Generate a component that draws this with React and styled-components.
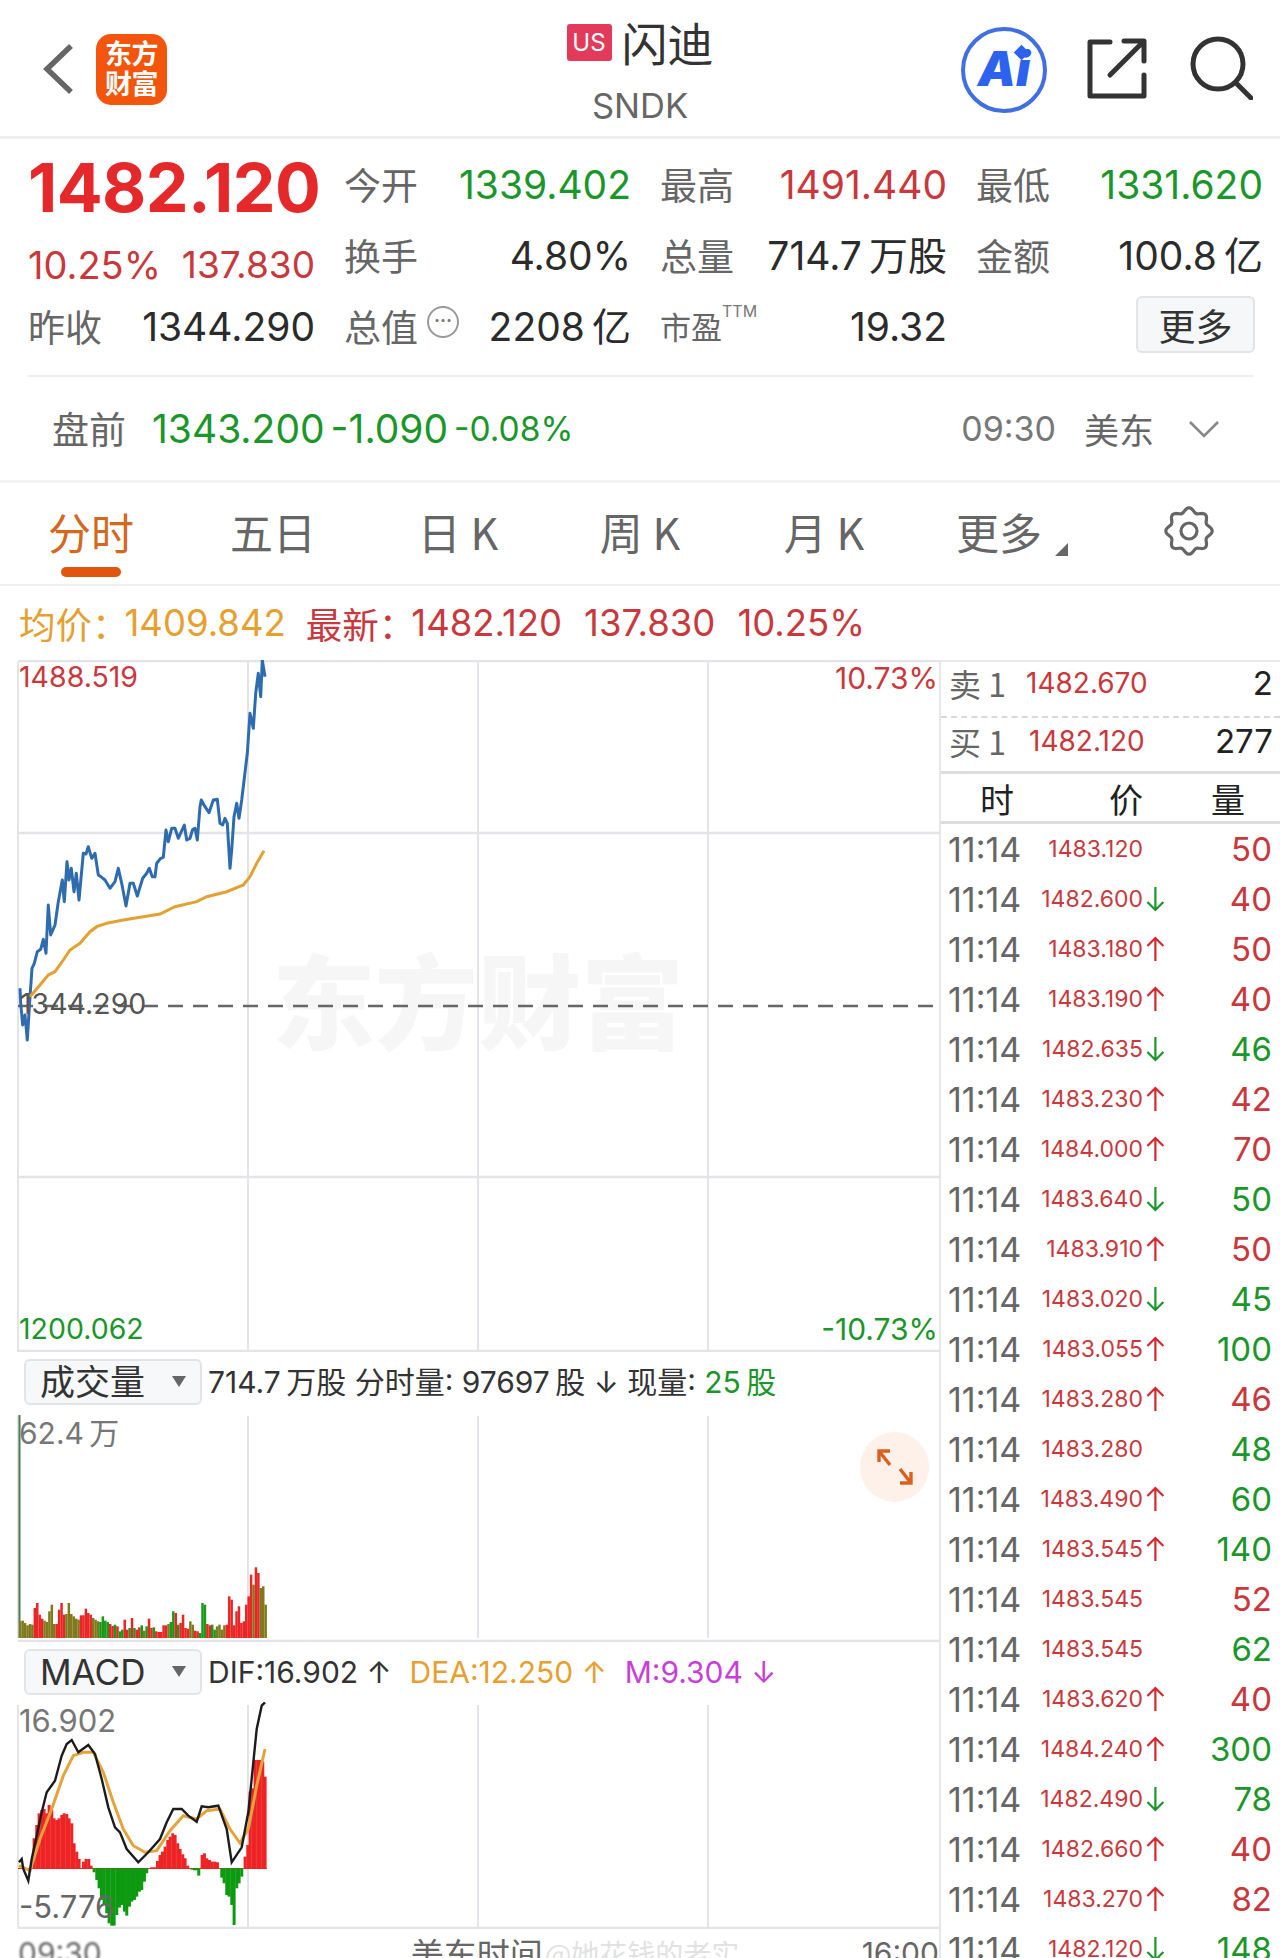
import React from 'react';
import styled, { createGlobalStyle } from 'styled-components';

const SOFT_RED = '#c8383c';
const GREEN = '#1b962a';
const ORANGE = '#e6a030';
const GREY = '#666';
const INK = '#2b2b2b';
const LINE = '#e4e4e8';
const THIN = '\u2009';

const pricePts = [[60,1015],[62,1060],[68,1125],[75,1095],[82,1170],[90,1040],[96,955],[103,940],[112,905],[122,898],[130,868],[138,910],[145,765],[152,855],[165,825],[175,755],[187,690],[193,755],[201,635],[207,690],[214,655],[222,725],[229,670],[237,750],[250,610],[258,612],[265,590],[275,625],[285,610],[295,675],[305,682],[315,690],[330,715],[345,695],[355,655],[365,700],[378,768],[390,700],[400,700],[412,738],[428,685],[440,670],[448,655],[457,680],[465,680],[470,640],[482,625],[490,622],[498,540],[505,575],[515,535],[525,535],[535,565],[553,525],[560,570],[570,565],[578,538],[585,535],[592,570],[600,470],[604,450],[615,470],[627,488],[640,450],[652,448],[660,520],[668,525],[675,505],[682,520],[690,655],[695,600],[702,500],[710,460],[717,505],[725,450],[733,385],[742,310],[750,190],[760,235],[767,130],[775,70],[782,140],[787,30],[795,80]];
const avgPts = [[90,1040],[120,1005],[145,975],[165,965],[190,930],[210,900],[240,880],[270,845],[290,830],[320,820],[370,810],[430,800],[480,792],[525,770],[590,755],[620,740],[680,725],[730,705],[750,680],[770,640],[792,602]];
const difPts = [[57,670],[65,660],[70,690],[85,725],[95,660],[110,590],[125,520],[140,460],[165,425],[185,350],[200,315],[215,303],[235,340],[265,318],[285,345],[305,420],[325,505],[345,565],[360,580],[380,630],[415,670],[445,640],[480,600],[500,550],[520,510],[545,510],[565,530],[590,548],[605,502],[625,505],[655,500],[680,570],[695,670],[725,625],[745,520],[770,270],[785,200],[795,190]];
const deaPts = [[57,680],[90,695],[120,600],[155,510],[190,410],[220,350],[250,340],[280,340],[310,400],[340,490],[370,570],[400,620],[435,640],[470,635],[510,575],[550,530],[590,540],[620,515],[660,510],[690,570],[720,612],[745,570],[770,440],[795,330]];

const volHeights = [50,52,45,38,42,40,90,105,70,58,52,48,80,100,42,42,85,105,70,72,105,72,65,58,55,68,68,88,75,70,60,55,50,48,65,52,48,42,36,40,35,20,25,55,25,30,60,30,25,32,38,22,35,58,30,32,20,18,18,38,38,42,48,80,75,40,45,70,30,28,50,40,22,20,15,105,100,42,38,40,25,35,40,25,38,40,125,115,38,80,95,45,50,100,125,190,160,212,195,150,155,100];
const volColors = 'oooooorrrrooooorrrroooooorrrrroooggggrrgrggrrgrgrrgogrrgrrrrroggrgrrrroorrgggrrggoooorrrrr' + 'rrrrrrorroo';

const histBars = [[102,90],[110,130],[117,165],[125,175],[132,178],[140,165],[147,190],[155,175],[162,150],[170,145],[177,150],[185,160],[192,165],[200,163],[207,150],[215,135],[222,75],[230,50],[237,28],[250,20],[258,28],[266,28],[273,8],[282,-12],[290,-35],[297,-60],[304,-95],[312,-110],[320,-135],[327,-165],[335,-172],[342,-172],[350,-140],[358,-118],[365,-110],[373,-130],[380,-142],[388,-115],[395,-100],[403,-95],[410,-85],[418,-70],[425,-65],[433,-40],[440,-15],[455,3],[463,3],[472,22],[480,40],[487,50],[495,65],[503,85],[510,95],[518,105],[525,100],[533,75],[540,58],[548,42],[555,30],[563,8],[575,-4],[583,-6],[590,-6],[596,-22],[606,40],[613,45],[620,30],[628,25],[636,20],[644,20],[652,18],[665,-28],[672,-45],[680,-80],[687,-85],[695,-110],[702,-170],[710,-60],[717,-45],[725,-25],[735,35],[743,70],[750,230],[758,240],[765,325],[773,325],[780,325],[788,320],[795,275]];

const toPage = (pts, oy) => pts.map(([x, y]) => `${(x / 3).toFixed(1)},${(y / 3 + oy).toFixed(1)}`).join(' ');

// scalloped outline of the settings gear
const gearPath = Array.from({ length: 97 }, (_, i) => {
  const a = (i / 96) * Math.PI * 2;
  const r = 21 + 2.2 * Math.cos(a * 8);
  return `${(25 + r * Math.cos(a)).toFixed(2)},${(25 + r * Math.sin(a)).toFixed(2)}`;
}).join(' ');

const rows = [
  ['1483.120', '', '50', 'r'], ['1482.600', 'd', '40', 'r'], ['1483.180', 'u', '50', 'r'], ['1483.190', 'u', '40', 'r'],
  ['1482.635', 'd', '46', 'g'], ['1483.230', 'u', '42', 'r'], ['1484.000', 'u', '70', 'r'], ['1483.640', 'd', '50', 'g'],
  ['1483.910', 'u', '50', 'r'], ['1483.020', 'd', '45', 'g'], ['1483.055', 'u', '100', 'g'], ['1483.280', 'u', '46', 'r'],
  ['1483.280', '', '48', 'g'], ['1483.490', 'u', '60', 'g'], ['1483.545', 'u', '140', 'g'], ['1483.545', '', '52', 'r'],
  ['1483.545', '', '62', 'g'], ['1483.620', 'u', '40', 'r'], ['1484.240', 'u', '300', 'g'], ['1482.490', 'd', '78', 'g'],
  ['1482.660', 'u', '40', 'r'], ['1483.270', 'u', '82', 'r'], ['1482.120', 'd', '148', 'g'],
];

const GlobalStyle = createGlobalStyle`
  html, body { margin: 0; padding: 0; background: #fff; }
  * { box-sizing: border-box; }
`;

const Arrow = ({ dir, color, size = 26 }) => (
  <svg width={size * 0.8} height={size} viewBox="0 0 20 26" fill="none" stroke={color} strokeWidth="2.2">
    {dir === 'u' ? <path d="M10 25V2M2 10l8-8 8 8" /> : <path d="M10 1v23M2 16l8 8 8-8" />}
  </svg>
);

const GridLines = ({ top, height, rowsAt = [] }) => (
  <>
    {[248, 478, 708].map(x => <line key={x} x1={x} x2={x} y1={top} y2={top + height} stroke={LINE} strokeWidth="2" />)}
    {rowsAt.map(y => <line key={y} x1="18" x2="939" y1={y} y2={y} stroke={LINE} strokeWidth="2.5" />)}
    <line x1="18" x2="18" y1={top} y2={top + height} stroke="#ddd" strokeWidth="1.5" />
  </>
);

export default function App() {
  return (
    <Page>
      <GlobalStyle />
      <Header>
        <HeaderLeft>
          <svg width="32" height="52" viewBox="0 0 32 52" fill="none" stroke="#666" strokeWidth="5.5">
            <path d="M29 3L5 26l24 23" />
          </svg>
          <Logo>东方<br />财富</Logo>
        </HeaderLeft>
        <TitleBlock>
          <TitleLine><Badge>US</Badge><StockName>闪迪</StockName></TitleLine>
          <Ticker>SNDK</Ticker>
        </TitleBlock>
        <HeaderRight>
          <AiBadge>Ai<AiSpark /></AiBadge>
          <svg width="62" height="62" viewBox="0 0 62 62" fill="none" stroke="#333" strokeWidth="5" strokeLinecap="round" strokeLinejoin="round">
            <path d="M24 5H4v54h54V38M24 38L57 5M38 4h20v20" />
          </svg>
          <svg width="64" height="64" viewBox="0 0 64 64" fill="none" stroke="#333" strokeWidth="5" strokeLinecap="round">
            <circle cx="29" cy="28" r="25" />
            <path d="M47 47l15 15" />
          </svg>
        </HeaderRight>
      </Header>

      <Quote>
        <Cell><BigPrice>1482.120</BigPrice></Cell>
        <Cell><Label>今开</Label><Value $color={GREEN}>1339.402</Value></Cell>
        <Cell><Label>最高</Label><Value $color={SOFT_RED}>1491.440</Value></Cell>
        <Cell><Label>最低</Label><Value $color={GREEN}>1331.620</Value></Cell>
        <Cell $lower><Value $color={SOFT_RED} $size={38}>10.25%</Value><Value $color={SOFT_RED} $size={37}>137.830</Value></Cell>
        <Cell><Label>换手</Label><Value>4.80%</Value></Cell>
        <Cell><Label>总量</Label><Value>{`714.7${THIN}万股`}</Value></Cell>
        <Cell><Label>金额</Label><Value>{`100.8${THIN}亿`}</Value></Cell>
        <Cell><Label>昨收</Label><Value>1344.290</Value></Cell>
        <Cell>
          <LabelGroup>
            <Label>总值</Label>
            <MoreDot>···</MoreDot>
          </LabelGroup>
          <Value>{`2208${THIN}亿`}</Value>
        </Cell>
        <Cell>
          <LabelGroup>
            <SmallLabel>市盈</SmallLabel>
            <Ttm>TTM</Ttm>
          </LabelGroup>
          <Value>19.32</Value>
        </Cell>
        <Cell $end><MoreButton>更多</MoreButton></Cell>
      </Quote>

      <PreMarket>
        <Label>盘前</Label>
        <PreValue>1343.200</PreValue>
        <PreValue>-1.090</PreValue>
        <PreSmall>-0.08%</PreSmall>
        <PreRight>
          <PreTime>09:30</PreTime>
          <PreZone>美东</PreZone>
          <svg width="32" height="20" viewBox="0 0 32 20" fill="none" stroke="#888" strokeWidth="2.6">
            <path d="M2 3l14 14L30 3" />
          </svg>
        </PreRight>
      </PreMarket>

      <Tabs>
        <Tab $active>分时</Tab>
        <Tab>五日</Tab>
        <Tab>日 K</Tab>
        <Tab>周 K</Tab>
        <Tab>月 K</Tab>
        <Tab>更多<MoreCorner /></Tab>
        <Tab>
          <svg width="50" height="50" viewBox="0 0 50 50" fill="none" stroke="#666" strokeWidth="3.2" strokeLinejoin="round">
            <polygon points={gearPath} />
            <circle cx="25" cy="25" r="8" />
          </svg>
        </Tab>
      </Tabs>

      <InfoLine>
        <InfoText $color={ORANGE} $gap={-4}>均价：</InfoText>
        <InfoText $color={ORANGE} $gap={20}>1409.842</InfoText>
        <InfoText $color={SOFT_RED} $gap={-4}>最新：</InfoText>
        <InfoText $color={SOFT_RED} $gap={22}>1482.120</InfoText>
        <InfoText $color={SOFT_RED} $gap={22}>137.830</InfoText>
        <InfoText $color={SOFT_RED}>10.25%</InfoText>
      </InfoLine>

      <Market>
        <Charts>
          <ChartBox $height={692} $top>
            <Watermark>东方财富</Watermark>
            <svg width="939" height="692" viewBox="0 660 939 692">
              <GridLines top={662} height={690} rowsAt={[661, 833, 1177, 1351]} />
              <line x1="18" x2="939" y1="1006" y2="1006" stroke="#666" strokeWidth="2.4" strokeDasharray="15 10" />
              <polyline points={toPage(pricePts, 650)} fill="none" stroke="#2f6cae" strokeWidth="3" strokeLinejoin="round" />
              <polyline points={toPage(avgPts, 650)} fill="none" stroke="#e3a033" strokeWidth="3" />
            </svg>
            <AxisLabel $top={-1} $left={19} $color={SOFT_RED}>1488.519</AxisLabel>
            <AxisLabel $top={0} $right={1} $size={30} $color={SOFT_RED}>10.73%</AxisLabel>
            <AxisLabel $top={326} $left={20} $color="#555">1344.290</AxisLabel>
            <AxisLabel $top={651} $left={19} $color={GREEN}>1200.062</AxisLabel>
            <AxisLabel $top={651} $right={1} $size={30} $color={GREEN}>-10.73%</AxisLabel>
          </ChartBox>

          <IndicatorBar>
            <Selector>成交量<SelectCaret /></Selector>
            <IndicatorText>{`714.7${THIN}万股 分时量: 97697${THIN}股 ↓ 现量: `}<Tint $color={GREEN}>{`25${THIN}股`}</Tint></IndicatorText>
          </IndicatorBar>

          <ChartBox $height={230}>
            <svg width="939" height="230" viewBox="0 1412 939 230">
              <GridLines top={1416} height={222} rowsAt={[1641]} />
              <rect x="18.5" y="1415" width="2" height="223" fill="#4c7d52" />
              {volHeights.map((h, i) => {
                const c = volColors[i] || 'o';
                return (
                  <rect key={i} x={19 + i * 2.43} y={1638 - h / 3} width="2.5" height={h / 3}
                    fill={c === 'r' ? '#e92525' : c === 'g' ? '#189a18' : '#7f7a1e'} />
                );
              })}
            </svg>
            <AxisLabel $top={3} $left={19} $size={30} $color="#777">{`62.4${THIN}万`}</AxisLabel>
            <Expand>
              <svg width="38" height="38" viewBox="0 0 38 38" fill="none" stroke="#d9601e" strokeWidth="3.4">
                <path d="M3 14V3h11M3 3l11 14M35 24v11H24M35 35L24 21" />
              </svg>
            </Expand>
          </ChartBox>

          <IndicatorBar>
            <Selector>MACD<SelectCaret /></Selector>
            <IndicatorText $size={30}>
              DIF:16.902 ↑<Tint $color={ORANGE} $gap={18}>DEA:12.250 ↑</Tint><Tint $color="#c83fd8" $gap={18}>M:9.304 ↓</Tint>
            </IndicatorText>
          </IndicatorBar>

          <ChartBox $height={227}>
            <svg width="939" height="227" viewBox="0 1703 939 227">
              <GridLines top={1706} height={222} rowsAt={[1929]} />
              <line x1="18" x2="267" y1="1869.5" y2="1869.5" stroke="#e92525" strokeWidth="1" />
              {histBars.map(([x, h], i) => (
                <rect key={i} x={x / 3 - 1.4} y={h > 0 ? 1869.3 - h / 3 : 1869.3} width="3" height={Math.abs(h) / 3}
                  fill={h > 0 ? '#ee2424' : '#0c9a10'} />
              ))}
              <polyline points={toPage(deaPts, 1640)} fill="none" stroke="#e4a33c" strokeWidth="3" />
              <polyline points={toPage(difPts, 1640)} fill="none" stroke="#1c1c1c" strokeWidth="2.4" />
            </svg>
            <AxisLabel $top={1} $left={19} $size={31} $color="#777">16.902</AxisLabel>
            <AxisLabel $top={187} $left={19} $size={31} $color="#666">-5.776</AxisLabel>
          </ChartBox>

          <AxisRow>
            <AxisTime $blur>09:30</AxisTime>
            <AxisMid>美东时间<Ghost>@她花钱的老实</Ghost></AxisMid>
            <AxisTime>16:00</AxisTime>
          </AxisRow>
        </Charts>

        <TradePanel>
          <BookRow $dashed>
            <BookSide>卖 1</BookSide>
            <BookPrice>1482.670</BookPrice>
            <BookQty>2</BookQty>
          </BookRow>
          <BookRow>
            <BookSide>买 1</BookSide>
            <BookPrice $shift>1482.120</BookPrice>
            <BookQty>277</BookQty>
          </BookRow>
          <TradeHead>
            <span>时</span>
            <span>价</span>
            <span>量</span>
          </TradeHead>
          {rows.map(([price, dir, qty, tone], i) => (
            <TradeRow key={i}>
              <TradeTime>11:14</TradeTime>
              <TradePrice>{price}</TradePrice>
              <ArrowSlot>{dir && <Arrow dir={dir} color={dir === 'u' ? '#d5282c' : '#1b962a'} />}</ArrowSlot>
              <TradeQty $color={tone === 'r' ? SOFT_RED : GREEN}>{qty}</TradeQty>
            </TradeRow>
          ))}
        </TradePanel>
      </Market>
    </Page>
  );
}

const Page = styled.div`
  width: 1280px;
  height: 1958px;
  overflow: hidden;
  background: #fff;
  color: ${INK};
  font-family: Inter, "Noto Sans CJK SC", sans-serif;
`;

const Header = styled.header`
  height: 139px;
  border-bottom: 3px solid #eee;
  display: grid;
  grid-template-columns: 1fr auto 1fr;
  align-items: center;
`;
const HeaderLeft = styled.div`
  display: flex;
  align-items: center;
  gap: 22px;
  padding-left: 42px;
  margin-top: 2px;
`;
const Logo = styled.div`
  width: 71px;
  height: 71px;
  border-radius: 15px;
  background: #f4550c;
  color: #fff;
  font-family: "Noto Sans CJK SC", sans-serif;
  font-weight: 700;
  font-size: 27px;
  line-height: 30px;
  text-align: center;
  padding-top: 4px;
  letter-spacing: -0.5px;
`;
const TitleBlock = styled.div`
  display: flex;
  flex-direction: column;
  align-items: center;
`;
const TitleLine = styled.div`
  display: flex;
  align-items: center;
  gap: 10px;
  height: 64px;
  margin-top: 6px;
`;
const Badge = styled.span`
  width: 45px;
  height: 37px;
  margin-top: -7px;
  border-radius: 3px;
  background: #e23a5a;
  color: #fff;
  font-size: 24px;
  line-height: 37px;
  text-align: center;
`;
const StockName = styled.span`
  font-family: "Noto Sans CJK SC", sans-serif;
  font-size: 46px;
  line-height: 64px;
  margin-top: -11px;
  color: #333;
`;
const Ticker = styled.div`
  font-size: 34.5px;
  line-height: 44px;
  color: #666;
  margin-top: 6px;
`;
const HeaderRight = styled.div`
  display: flex;
  align-items: center;
  justify-content: flex-end;
  gap: 41px;
  padding-right: 27px;
`;
const AiBadge = styled.div`
  position: relative;
  width: 86px;
  height: 86px;
  margin: 4px -2px 0 0;
  border: 4px solid #3f6fe0;
  border-radius: 50%;
  color: #2c62ee;
  font-size: 48px;
  font-weight: 900;
  font-style: italic;
  line-height: 76px;
  text-align: center;
`;
const AiSpark = styled.i`
  position: absolute;
  top: 16px;
  right: 16px;
  width: 11px;
  height: 11px;
  background: #2c62ee;
  transform: rotate(45deg);
`;

const Quote = styled.section`
  margin: 0 27px 0 28px;
  padding-top: 10px;
  height: 238px;
  border-bottom: 2px solid #eee;
  display: grid;
  grid-template-columns: repeat(4, 287px);
  column-gap: 29px;
  grid-auto-rows: 71px;
`;
const Cell = styled.div`
  display: flex;
  align-items: center;
  justify-content: ${p => (p.$end ? 'flex-end' : 'space-between')};
  padding-top: ${p => (p.$lower ? 18 : 0)}px;
  padding-right: ${p => (p.$end ? 8 : 0)}px;
`;
const BigPrice = styled.div`
  font-size: 68px;
  font-weight: 700;
  letter-spacing: -0.6px;
  margin-top: 5px;
  color: #e5282a;
`;
const Label = styled.span`
  font-family: "Noto Sans CJK SC", sans-serif;
  font-size: 37px;
  line-height: 50px;
  margin-top: -2px;
  color: ${GREY};
`;
const SmallLabel = styled(Label)`
  font-size: 31px;
`;
const Value = styled.span`
  font-size: ${p => p.$size || 39}px;
  line-height: 46px;
  white-space: nowrap;
  color: ${p => p.$color || INK};
`;
const LabelGroup = styled.div`
  position: relative;
  display: flex;
  align-items: center;
`;
const MoreDot = styled.span`
  position: absolute;
  left: 83px;
  top: 3px;
  width: 32px;
  height: 32px;
  border: 2px solid #999;
  border-radius: 50%;
  font-size: 18px;
  font-weight: 700;
  line-height: 25px;
  text-align: center;
  color: #777;
`;
const Ttm = styled.span`
  position: absolute;
  left: 62px;
  top: -2px;
  font-size: 16px;
  color: #777;
`;
const MoreButton = styled.button`
  width: 119px;
  height: 57px;
  margin-top: -4px;
  border: 2px solid #e2e4e8;
  border-radius: 6px;
  background: #f5f7f9;
  font-family: "Noto Sans CJK SC", sans-serif;
  font-size: 37px;
  color: #333;
  padding: 0;
`;

const PreMarket = styled.section`
  height: 106px;
  border-bottom: 3px solid #f2f2f2;
  display: flex;
  align-items: center;
  padding: 0 60px 0 52px;
  gap: 6px;
`;
const PreValue = styled.span`
  font-size: 39px;
  color: ${GREEN};
  margin-left: 20px;
  margin-right: -20px;
`;
const PreSmall = styled.span`
  font-size: 33.5px;
  color: ${GREEN};
  margin-left: 20px;
`;
const PreRight = styled.div`
  margin-left: auto;
  display: flex;
  align-items: center;
  gap: 28px;
  color: #777;
`;
const PreTime = styled.span`
  font-size: 34px;
  color: #777;
`;
const PreZone = styled.span`
  font-family: "Noto Sans CJK SC", sans-serif;
  font-size: 35px;
  margin-right: 6px;
  color: ${GREY};
`;

const Tabs = styled.nav`
  height: 103px;
  border-bottom: 2px solid #f0f0f0;
  display: grid;
  grid-template-columns: 182px 182px 188px 176px 192px 158px 222px;
`;
const Tab = styled.div`
  position: relative;
  display: flex;
  align-items: center;
  justify-content: center;
  padding-bottom: 5px;
  font-family: "Noto Sans CJK SC", Inter, sans-serif;
  font-size: 43px;
  color: ${p => (p.$active ? '#d2691e' : GREY)};
  &::after {
    content: '';
    display: ${p => (p.$active ? 'block' : 'none')};
    position: absolute;
    left: 61px;
    bottom: 7px;
    width: 60px;
    height: 10px;
    border-radius: 5px;
    background: #e0560f;
  }
`;
const MoreCorner = styled.i`
  position: absolute;
  right: 10px;
  top: 60px;
  width: 0;
  height: 0;
  border-left: 13px solid transparent;
  border-bottom: 13px solid #666;
`;

const InfoLine = styled.div`
  height: 74px;
  display: flex;
  align-items: center;
  padding-left: 19px;
`;
const InfoText = styled.span`
  font-size: 36.5px;
  color: ${p => p.$color};
  margin-right: ${p => p.$gap || 0}px;
`;

const Market = styled.div`
  display: flex;
  height: 1300px;
`;
const Charts = styled.div`
  width: 939px;
  flex: none;
`;
const ChartBox = styled.div`
  position: relative;
  height: ${p => p.$height}px;
  & > svg { display: block; position: relative; }
`;
const Watermark = styled.div`
  position: absolute;
  left: 272px;
  top: 278px;
  font-family: "Noto Sans CJK SC", sans-serif;
  font-size: 103px;
  font-weight: 900;
  color: #f6f6f6;
  white-space: nowrap;
  line-height: 120px;
`;
const AxisLabel = styled.div`
  position: absolute;
  top: ${p => p.$top}px;
  ${p => (p.$left !== undefined ? `left: ${p.$left}px;` : `right: ${p.$right}px;`)}
  font-size: ${p => p.$size || 28.5}px;
  line-height: 36px;
  color: ${p => p.$color};
`;
const IndicatorBar = styled.div`
  height: 60px;
  display: flex;
  align-items: center;
  padding-left: 24px;
`;
const Selector = styled.div`
  position: relative;
  width: 178px;
  height: 46px;
  border: 2px solid #e2e4e8;
  border-radius: 6px;
  background: #f6f8f9;
  font-size: 35px;
  line-height: 42px;
  padding-left: 14px;
  color: #333;
`;
const SelectCaret = styled.i`
  position: absolute;
  right: 14px;
  top: 15px;
  width: 0;
  height: 0;
  border-left: 7px solid transparent;
  border-right: 7px solid transparent;
  border-top: 11px solid #666;
`;
const IndicatorText = styled.div`
  margin-left: 6px;
  font-size: ${p => p.$size || 30}px;
  line-height: 40px;
  color: #333;
  white-space: nowrap;
`;
const Tint = styled.span`
  color: ${p => p.$color};
  margin-left: ${p => p.$gap || 0}px;
`;
const Expand = styled.div`
  position: absolute;
  left: 860px;
  top: 20px;
  width: 69px;
  height: 70px;
  border-radius: 50%;
  background: #fdf1ea;
  display: flex;
  align-items: center;
  justify-content: center;
`;
const AxisRow = styled.div`
  height: 28px;
  padding: 4px 0 0 18px;
  display: flex;
  justify-content: space-between;
  font-size: 30px;
  line-height: 40px;
  color: #666;
`;
const AxisTime = styled.span`
  filter: ${p => (p.$blur ? 'blur(1px)' : 'none')};
`;
const AxisMid = styled.span`
  position: relative;
  font-family: "Noto Sans CJK SC", sans-serif;
  font-size: 33px;
  margin-right: 10px;
`;
const Ghost = styled.span`
  position: absolute;
  left: 134px;
  top: 0;
  white-space: nowrap;
  color: #e2e2e2;
  font-size: 28px;
`;

const TradePanel = styled.aside`
  flex: 1;
  border-left: 2px solid #e6e6e6;
  border-top: 2px solid #e8e8e8;
`;
const BookRow = styled.div`
  height: 56px;
  padding: ${p => (p.$dashed ? '0 7px 12px 8px' : '0 7px 8px 8px')};
  display: flex;
  align-items: center;
  border-bottom: ${p => (p.$dashed ? '2px dashed #d8d8d8' : '3px solid #ddd')};
`;
const BookSide = styled.span`
  font-family: "Noto Sans CJK SC", Inter, sans-serif;
  font-size: 32px;
  color: ${GREY};
  width: 70px;
`;
const BookPrice = styled.span`
  font-size: 28px;
  color: ${SOFT_RED};
  margin-left: ${p => (p.$shift ? 10 : 7)}px;
`;
const BookQty = styled.span`
  margin-left: auto;
  font-size: 33px;
  color: #222;
`;
const TradeHead = styled.div`
  height: 50px;
  padding-bottom: 6px;
  border-bottom: 3px solid #ddd;
  display: grid;
  grid-template-columns: 73px 129px 102px;
  align-items: center;
  font-family: "Noto Sans CJK SC", sans-serif;
  font-size: 34px;
  color: #222;
  text-align: right;
`;
const TradeRow = styled.div`
  height: 50px;
  display: flex;
  align-items: center;
  padding: 0 8px 0 7px;
`;
const TradeTime = styled.span`
  width: 90px;
  font-size: 34px;
  color: ${GREY};
  white-space: nowrap;
`;
const TradePrice = styled.span`
  width: 105px;
  text-align: right;
  font-size: 23px;
  color: ${SOFT_RED};
`;
const ArrowSlot = styled.span`
  width: 22px;
  margin-left: 1px;
  display: flex;
  align-items: center;
  justify-content: center;
`;
const TradeQty = styled.span`
  margin-left: auto;
  font-size: 33px;
  color: ${p => p.$color};
`;
